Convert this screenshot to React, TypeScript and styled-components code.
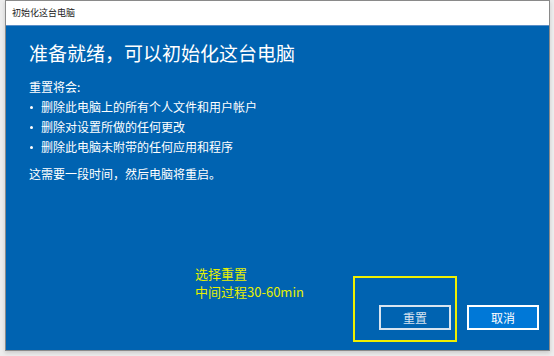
import React from 'react'
import styled, { createGlobalStyle } from 'styled-components'

const GlobalStyle = createGlobalStyle`
  html, body {
    margin: 0;
    padding: 0;
    background: #ededed;
    font-family: "Noto Sans CJK SC", "Noto Sans", sans-serif;
  }
`

const App = () => {
  return (
    <Page>
      <GlobalStyle />
      <Window>
        <TitleBar>初始化这台电脑</TitleBar>
        <Content>
          <Heading>准备就绪，可以初始化这台电脑</Heading>
          <Line>重置将会:</Line>
          <List>
            <Item>删除此电脑上的所有个人文件和用户帐户</Item>
            <Item>删除对设置所做的任何更改</Item>
            <Item>删除此电脑未附带的任何应用和程序</Item>
          </List>
          <Note>这需要一段时间，然后电脑将重启。</Note>
          <Footer>
            <Annotation>
              选择重置
              <br />
              中间过程30-60min
            </Annotation>
            <Highlight>
              <Button>重置</Button>
            </Highlight>
            <Button primary>取消</Button>
          </Footer>
        </Content>
      </Window>
    </Page>
  )
}

export default App

const Page = styled.div`
  width: 554px;
  height: 356px;
  padding-left: 5px;
  box-sizing: border-box;
`
const Window = styled.div`
  width: 545px;
  height: 351px;
  border: 1px solid #8a8a8a;
  box-sizing: border-box;
  display: flex;
  flex-direction: column;
  box-shadow: 0 2px 4px rgba(0, 0, 0, 0.15);
`
const TitleBar = styled.div`
  height: 24px;
  background: #fff;
  color: #222;
  font-size: 9px;
  line-height: 24px;
  padding-left: 6px;
  border-bottom: 1px solid #5a8fc8;
`
const Content = styled.div`
  flex: 1;
  background: #0063b1;
  color: #fff;
  padding: 14px 10px 8px 23px;
  display: flex;
  flex-direction: column;
`
const Heading = styled.div`
  font-size: 19px;
  line-height: 26px;
  margin-bottom: 11px;
`
const Line = styled.div`
  font-size: 12px;
  line-height: 20px;
`
const List = styled.ul`
  margin: 0;
  padding: 0;
  list-style: none;
`
const Item = styled.li`
  font-size: 12px;
  line-height: 20px;
  padding-left: 12px;
  position: relative;
  &::before {
    content: '';
    position: absolute;
    left: 1px;
    top: 9px;
    width: 3px;
    height: 3px;
    border-radius: 50%;
    background: #fff;
  }
`
const Note = styled.div`
  font-size: 12px;
  line-height: 20px;
  margin-top: 7px;
`
const Footer = styled.div`
  margin-top: auto;
  display: flex;
  align-items: flex-end;
  gap: 10px;
`
const Annotation = styled.div`
  color: #e6f000;
  font-size: 13px;
  line-height: 18px;
  margin-left: 166px;
  margin-bottom: 41px;
  margin-right: auto;
`
const Highlight = styled.div`
  width: 104px;
  height: 66px;
  border: 2px solid #f0f000;
  box-sizing: border-box;
  display: flex;
  align-items: flex-end;
  justify-content: flex-end;
  padding: 0 4px 10px 0;
`
const Button = styled.div<{ primary?: boolean }>`
  width: 72px;
  height: 25px;
  box-sizing: border-box;
  border: 2px solid ${p => (p.primary ? '#ffffff' : '#d8e4f0')};
  background: ${p => (p.primary ? '#0078d7' : '#0063b1')};
  color: ${p => (p.primary ? '#ffffff' : '#d8e4f0')};
  font-size: 12px;
  display: flex;
  align-items: center;
  justify-content: center;
  margin-bottom: ${p => (p.primary ? '12px' : '0')};
`
